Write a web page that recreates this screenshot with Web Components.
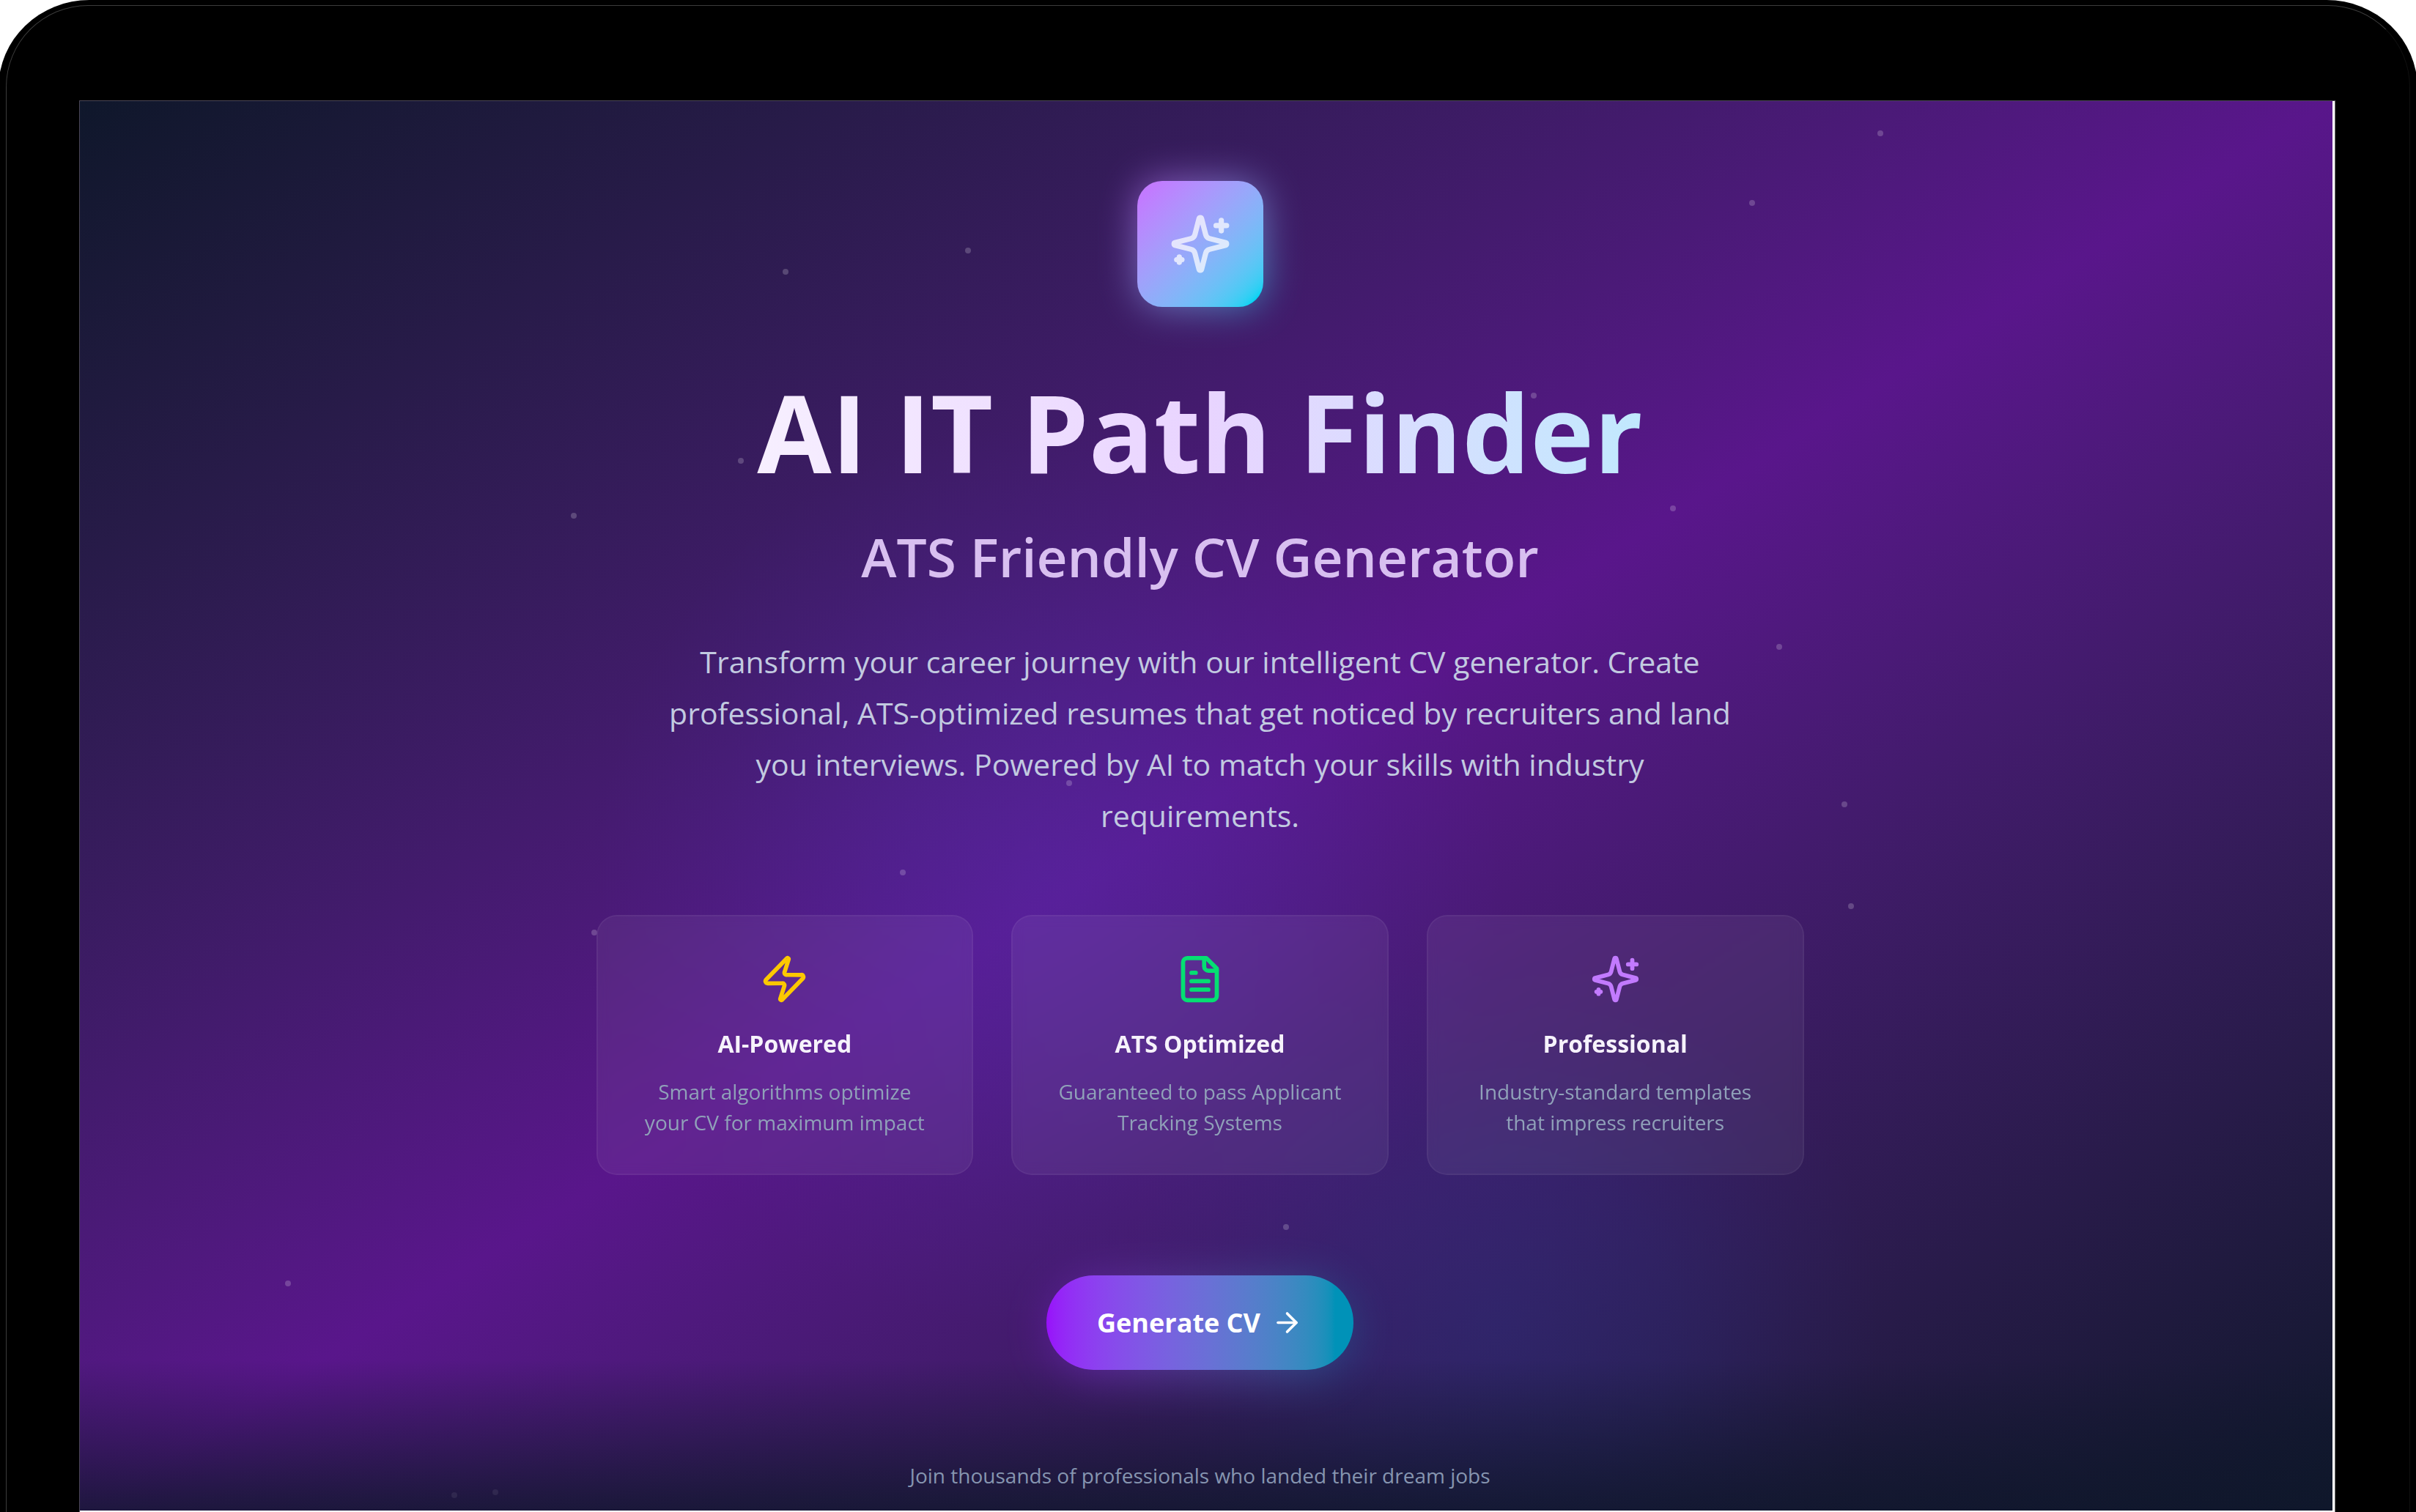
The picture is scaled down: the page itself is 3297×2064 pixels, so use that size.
<!DOCTYPE html>
<html lang="en">
<head>
<meta charset="utf-8">
<title>AI IT Path Finder</title>
<style>
  html, body { margin: 0; background: #fff; }
  body { font-family: "Open Sans", "Noto Sans", sans-serif; overflow: hidden; }
</style>
</head>
<body>
<device-frame>
  <landing-page>
    <app-logo></app-logo>
    <hero-heading>
      <span slot="title">AI IT Path Finder</span>
      <span slot="subtitle">ATS Friendly CV Generator</span>
      <span slot="lead">Transform your career journey with our intelligent CV generator. Create professional, ATS-optimized resumes that get noticed by recruiters and land you interviews. Powered by AI to match your skills with industry requirements.</span>
    </hero-heading>
    <feature-list>
      <feature-card icon="zap" tone="#fcc800">
        <span slot="title">AI-Powered</span>
        Smart algorithms optimize your CV for maximum impact
      </feature-card>
      <feature-card icon="file" tone="#05df72">
        <span slot="title">ATS Optimized</span>
        Guaranteed to pass Applicant Tracking Systems
      </feature-card>
      <feature-card icon="sparkles" tone="#c27aff">
        <span slot="title">Professional</span>
        Industry-standard templates that impress recruiters
      </feature-card>
    </feature-list>
    <cta-button>Generate CV</cta-button>
    <foot-note>Join thousands of professionals who landed their dream jobs</foot-note>
  </landing-page>
</device-frame>

<script>
const ICONS = {
  sparkles: '<path d="M9.937 15.5A2 2 0 0 0 8.5 14.063l-6.135-1.582a.5.5 0 0 1 0-.962L8.5 9.936A2 2 0 0 0 9.937 8.5l1.582-6.135a.5.5 0 0 1 .963 0L14.063 8.5A2 2 0 0 0 15.5 9.937l6.135 1.581a.5.5 0 0 1 0 .964L15.5 14.063a2 2 0 0 0-1.437 1.437l-1.582 6.135a.5.5 0 0 1-.963 0z"/><path d="M20 3v4"/><path d="M22 5h-4"/><path d="M4 17v2"/><path d="M5 18H3"/>',
  zap: '<path d="M4 14a1 1 0 0 1-.78-1.63l9.9-10.2a.5.5 0 0 1 .86.46l-1.92 6.02A1 1 0 0 0 13 10h7a1 1 0 0 1 .78 1.63l-9.9 10.2a.5.5 0 0 1-.86-.46l1.92-6.02A1 1 0 0 0 11 14z"/>',
  file: '<path d="M15 2H6a2 2 0 0 0-2 2v16a2 2 0 0 0 2 2h12a2 2 0 0 0 2-2V7Z"/><path d="M14 2v4a2 2 0 0 0 2 2h4"/><path d="M10 9H8"/><path d="M16 13H8"/><path d="M16 17H8"/>',
  arrow: '<path d="M5 12h14"/><path d="m12 5 7 7-7 7"/>'
};
const icon = name => `<svg viewBox="0 0 24 24" fill="none" stroke="currentColor" stroke-width="2" stroke-linecap="round" stroke-linejoin="round" aria-hidden="true">${ICONS[name]}</svg>`;

class Base extends HTMLElement {
  connectedCallback() {
    if (this.shadowRoot) return;
    this.attachShadow({ mode: 'open' }).innerHTML = this.render();
  }
}

customElements.define('device-frame', class extends Base {
  render() {
    return `<style>
      :host { display: block; overflow: hidden; }
      .body { position: relative; box-sizing: border-box; display: flex; min-height: 100vh;
        margin: 0 -2px; padding: 137px 112px 0 110px; background: #000; border-radius: 124px 124px 0 0 / 120px 120px 0 0; }
      .rim { position: absolute; inset: 7px 10px -8px 10px; border: 1px solid #3c3c3c; border-right-color: #101010;
        border-radius: 112px 112px 0 0; pointer-events: none; }
      .screen { flex: 1; display: flex; box-sizing: border-box; padding: 0 3px 2px 0; background: #fff;
        border: 1px solid #4a4656; border-bottom: 0; border-right-color: #777; }
      ::slotted(*) { flex: 1; }
    </style>
    <div class="body"><div class="rim"></div><div class="screen"><slot></slot></div></div>`;
  }
});

customElements.define('landing-page', class extends Base {
  render() {
    const stars = [[79.8,2.1],[74.1,7],[39.3,10.4],[31.2,11.9],[29.2,25.3],[21.8,29.2],[64.4,20.7],
      [70.6,28.7],[75.3,38.5],[78.2,49.7],[78.5,56.9],[43.8,48.2],[36.4,54.5],[22.7,58.8],[53.4,79.7],[9.1,83.7]];
    const faint = [[16.5,98.7],[18.3,98.5]];
    const dot = c => ([x, y]) => `<i class="${c}" style="left:${x}%;top:${y}%"></i>`;
    return `<style>
      :host { display: block; position: relative; overflow: hidden;
        background:
          radial-gradient(circle 620px at 43% 55%, rgba(84,66,205,.24), rgba(78,68,205,.17) 35%, rgba(72,72,205,.05) 75%, transparent),
          radial-gradient(circle 520px at 63% 87%, rgba(36,66,160,.24), rgba(36,66,160,.16) 45%, rgba(36,66,160,.05) 78%, transparent),
          linear-gradient(to bottom right in oklab, #0f172b, #59168b, #0f172b); }
      .fade { position: absolute; inset: auto 0 0 0; height: 206px;
        background: linear-gradient(to top in oklab, #0f172b, rgba(15,23,43,0)); opacity: .8; }
      i { position: absolute; width: 8px; height: 8px; border-radius: 50%; background: rgba(255,255,255,.2); }
      i.faint { background: rgba(255,255,255,.07); }
      main { position: relative; display: flex; flex-direction: column; align-items: center;
        box-sizing: border-box; padding: 109px 17px 24px 0; text-align: center; }
    </style>
    <div>${stars.map(dot('star')).join('')}</div>
    <div class="fade"></div>
    <div>${faint.map(dot('faint')).join('')}</div>
    <main><slot></slot></main>`;
  }
});

customElements.define('app-logo', class extends Base {
  render() {
    return `<style>
      :host { display: block; position: relative; width: 172px; height: 172px; }
      .glow, .tile { border-radius: 34px; background: linear-gradient(to bottom right in oklab, #c27aff 8%, #00d3f3 94%); }
      .glow { position: absolute; inset: 0; filter: blur(26px); opacity: .6; }
      .tile { position: relative; display: flex; align-items: center; justify-content: center; height: 100%; }
      svg { width: 86px; height: 86px; color: #fff; opacity: .72; }
    </style>
    <div class="glow"></div><div class="tile">${icon('sparkles')}</div>`;
  }
});

customElements.define('hero-heading', class extends Base {
  render() {
    return `<style>
      :host { display: flex; flex-direction: column; align-items: center; width: 100%; max-width: 1922px; margin-top: 93px; }
      h1, h2, p { margin: 0; }
      h1 { width: 100%; font-size: 147px; line-height: 154px; font-weight: 700;
        background: linear-gradient(to right in oklab, #fff, #e9d4ff, #a2f4fd);
        -webkit-background-clip: text; background-clip: text; color: transparent; }
      h2 { margin-top: 51px; font-size: 73px; line-height: 86px; font-weight: 600; color: #d8bff0; }
      p { max-width: 1460px; margin-top: 65px; font-size: 41px; line-height: 70px; color: #c2cae0; }
    </style>
    <h1><slot name="title"></slot></h1>
    <h2><slot name="subtitle"></slot></h2>
    <p><slot name="lead"></slot></p>`;
  }
});

customElements.define('feature-list', class extends Base {
  render() {
    return `<style>
      :host { display: grid; grid-template-columns: repeat(3, 1fr); gap: 52px; width: 100%; max-width: 1648px; margin-top: 101px; }
    </style><slot></slot>`;
  }
});

customElements.define('feature-card', class extends Base {
  render() {
    return `<style>
      :host { display: flex; flex-direction: column; align-items: center; box-sizing: border-box;
        padding: 51px 51px 49px; border: 2px solid rgba(255,255,255,.1); border-radius: 28px;
        background: rgba(255,255,255,.06); background-clip: padding-box; backdrop-filter: blur(8px); }
      svg { display: block; width: 69px; height: 69px; color: ${this.getAttribute('tone')}; }
      h3, p { margin: 0; }
      h3 { margin-top: 28px; font-size: 32px; line-height: 51px; font-weight: 700; color: #f6f2fb; }
      p { margin-top: 19px; font-size: 28px; line-height: 42px; color: #90a1b9; }
    </style>
    ${icon(this.getAttribute('icon'))}
    <h3><slot name="title"></slot></h3>
    <p><slot></slot></p>`;
  }
});

customElements.define('cta-button', class extends Base {
  render() {
    return `<style>
      :host { display: block; position: relative; margin-top: 137px; }
      .glow, button { border-radius: 65px; background: linear-gradient(to right in oklab, #9810fa, #0092b8 94%); }
      .glow { position: absolute; inset: 8px 8px -8px; filter: blur(32px); opacity: .4; }
      button { position: relative; display: flex; align-items: center; gap: 15px; height: 129px; padding: 0 69px; border: 0;
        font: 700 36px/52px "Open Sans", "Noto Sans", sans-serif; color: #fff; cursor: pointer; }
      svg { width: 43px; height: 43px; }
    </style>
    <div class="glow"></div>
    <button type="button"><span><slot></slot></span>${icon('arrow')}</button>`;
  }
});

customElements.define('foot-note', class extends Base {
  render() {
    return `<style>
      :host { display: block; margin-top: 123px; font-size: 28px; line-height: 43px; color: #8695b0; }
    </style><slot></slot>`;
  }
});
</script>
</body>
</html>
